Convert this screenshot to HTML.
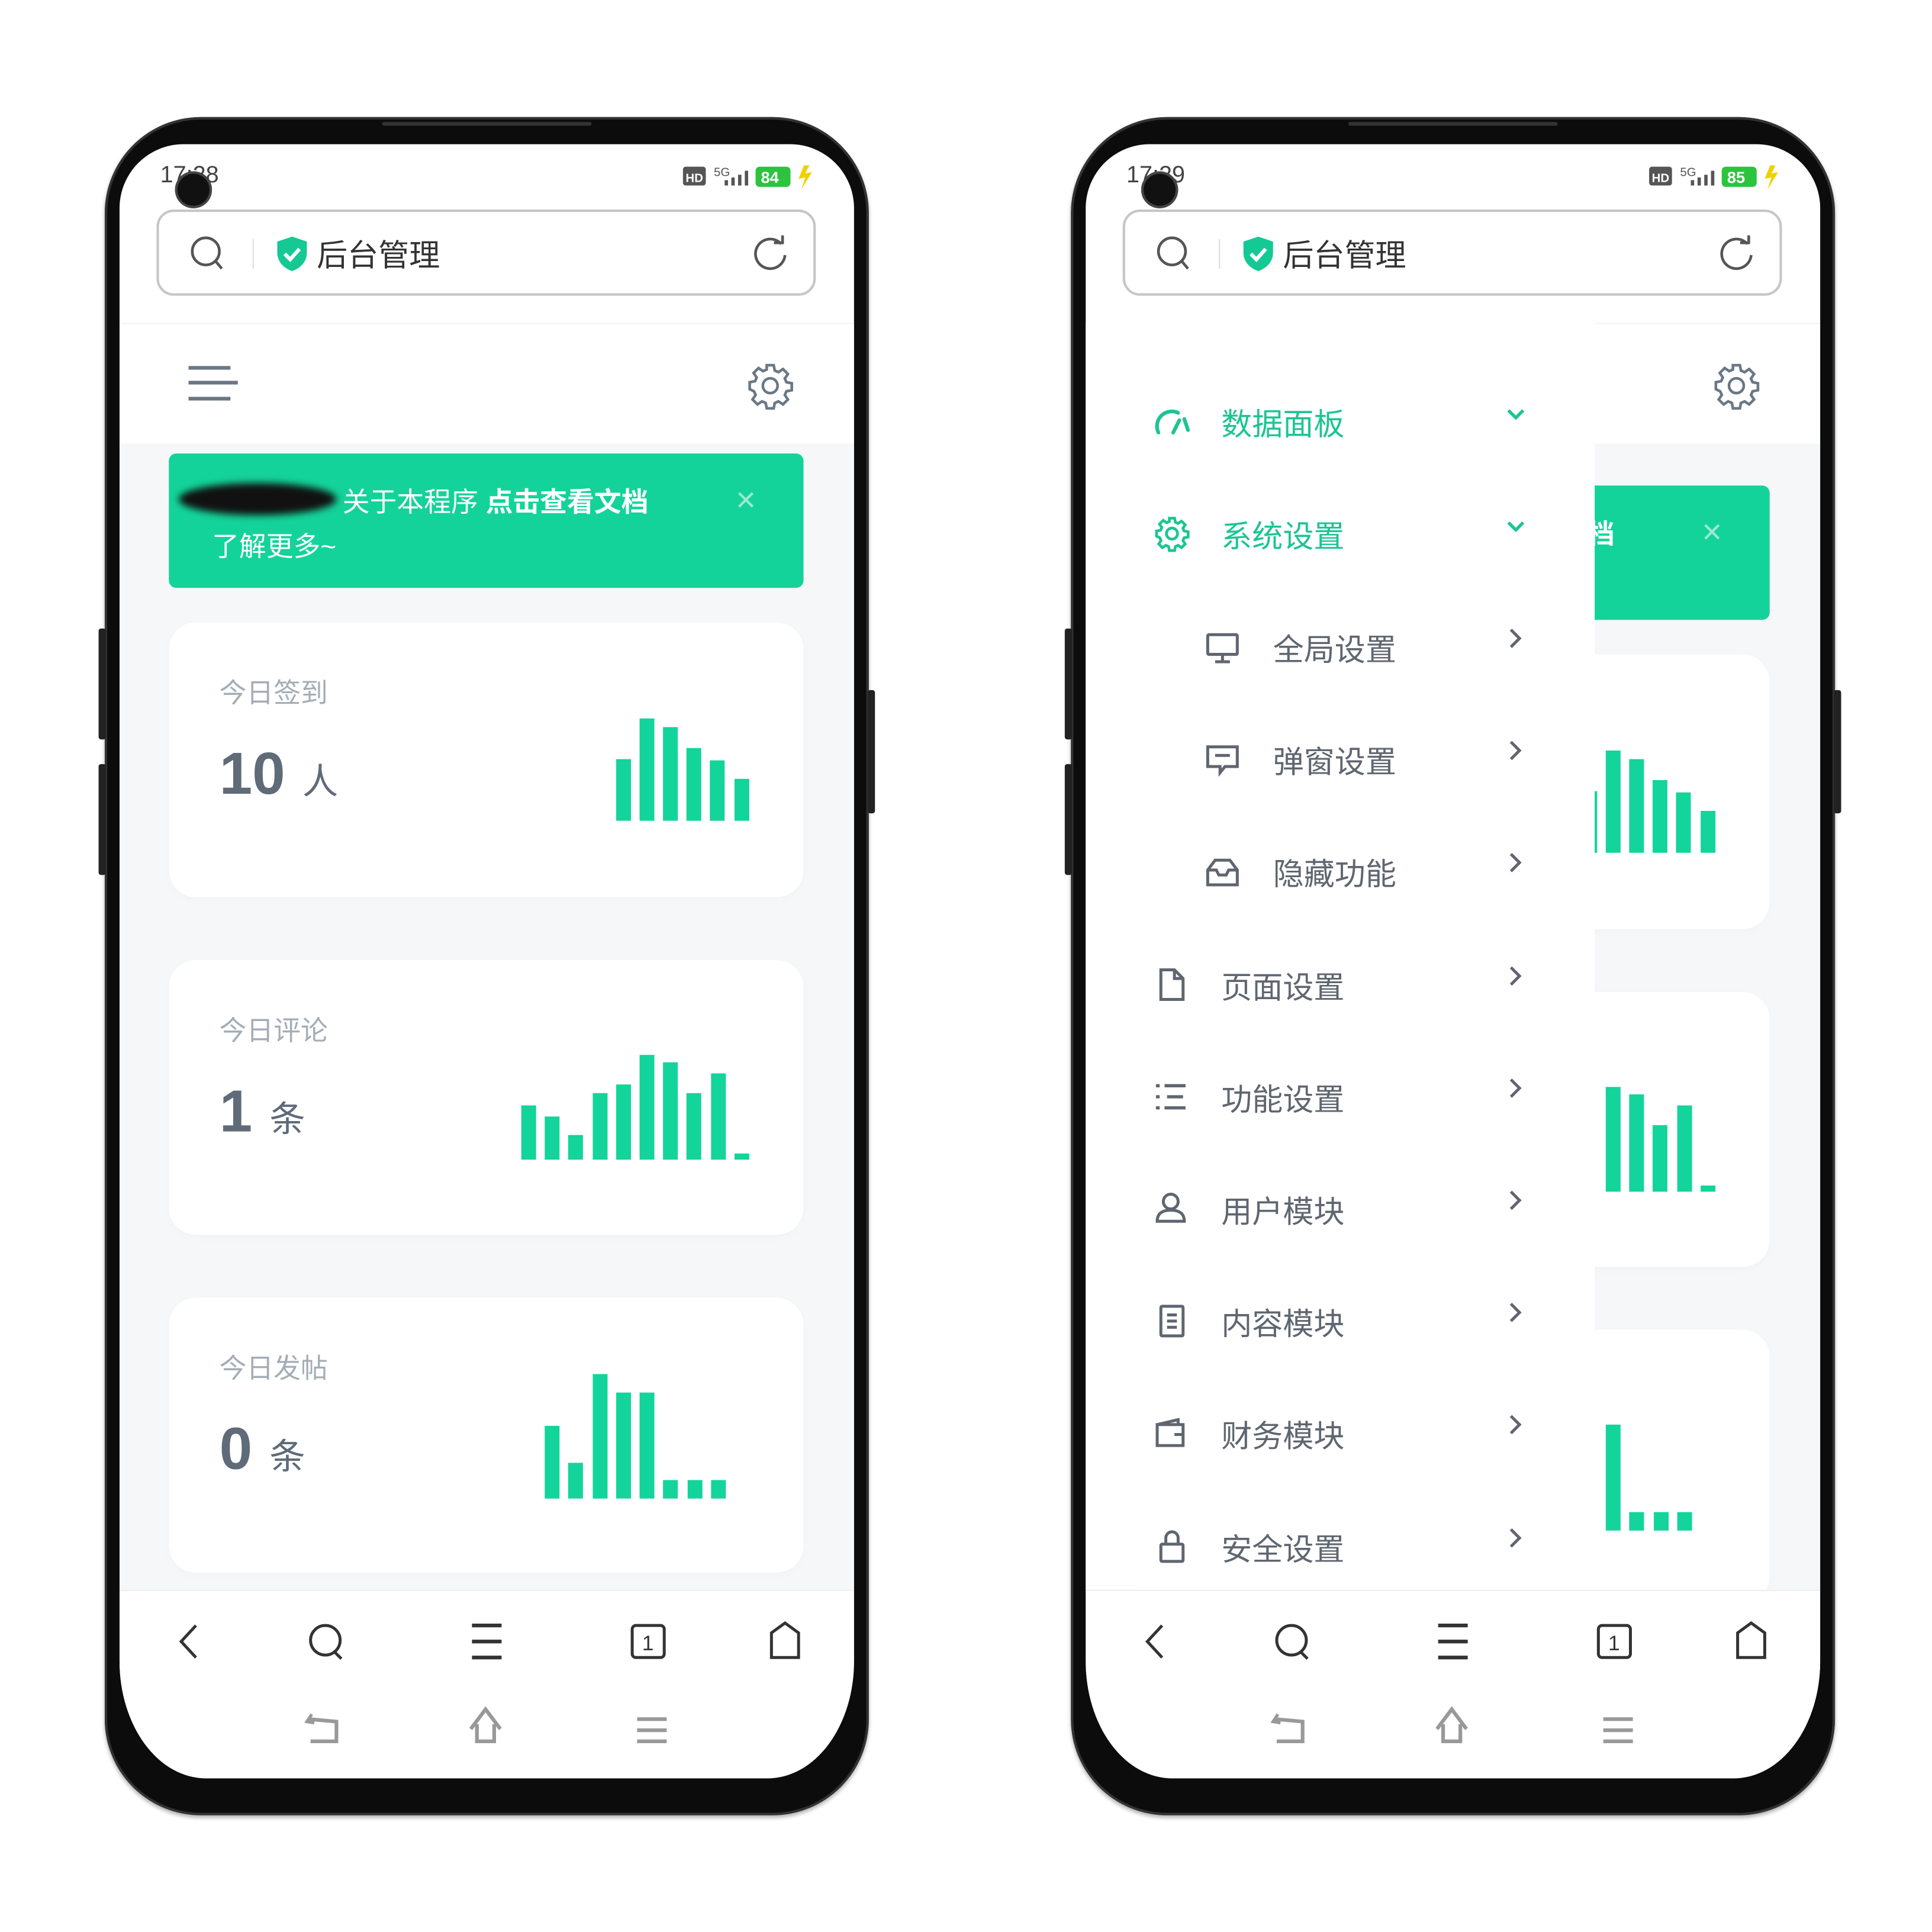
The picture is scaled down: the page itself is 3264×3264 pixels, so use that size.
<!DOCTYPE html>
<html><head><meta charset="utf-8">
<style>
*{margin:0;padding:0;box-sizing:border-box}
html,body{width:3264px;height:3264px;overflow:hidden;background:#fff}
body{font-family:"Liberation Sans","Noto Sans CJK SC",sans-serif}
#w{position:absolute;left:0;top:0;width:1560px;height:1560px;transform:scale(2.082);transform-origin:0 0}
.ph{position:absolute;top:95px;width:620px;height:1378px;background:#0c0c0c;border-radius:78px;box-shadow:inset 0 0 0 2px #333, 0 2px 3px rgba(0,0,0,.3)}
.btn{position:absolute;background:#222;width:6px;border-radius:2px}
.spk{position:absolute;left:225px;top:4px;width:170px;height:3px;background:#333;border-radius:2px}
.scr{position:absolute;left:12px;top:22px;width:596px;height:1326px;background:#fff;border-radius:52px 52px 70px 70px/52px 52px 95px 95px;overflow:hidden}
.a{position:absolute}
.time{left:33px;top:15px;font-size:19px;color:#444}
.cam{left:45px;top:22px;width:30px;height:30px;border-radius:50%;background:#111;box-shadow:0 0 0 2px #444 inset}
.addr{left:30px;top:53px;width:535px;height:70px;border:2px solid #c6c6c6;border-radius:14px;background:#fff}
.addr .t{position:absolute;left:128px;top:16px;font-size:25px;color:#333}
.hdr{left:0;top:145px;width:596px;height:98px;background:#fff;border-top:1px solid #f2f2f2}
.cont{left:0;top:243px;width:596px;height:930px;background:#f6f7f9}
.ban{left:40px;width:515px;height:109px;background:#14d39a;border-radius:6px;color:#fff;font-size:22px}
.card{left:40px;width:515px;height:223px;background:#fff;border-radius:22px;box-shadow:0 2px 8px rgba(0,0,0,.02)}
.lbl{position:absolute;left:41px;top:40px;font-size:22px;color:#a4adb6}
.num{position:absolute;left:41px;top:96px;font-size:48px;font-weight:bold;color:#5f6b78;line-height:56px}
.num span{font-size:29px;font-weight:normal;margin-left:14px;color:#5f6b78}
.bar{position:absolute;width:12px;background:#13d49b}
.nav{left:0;top:1173px;width:596px;height:160px;background:#fff;border-top:1px solid #eeeeee}
.drawer{left:0;top:145px;width:413px;height:1028px;background:#fff}
.mi{position:absolute;left:0;width:413px;height:40px;font-size:25px;color:#5f6670}
.mi .tx{position:absolute;top:2px}
.mi svg{position:absolute}
.g{color:#1cc593}
</style></head><body><div id="w">

<!-- LEFT PHONE -->
<div class="ph" style="left:85px">
 <div class="btn" style="left:-5px;top:415px;height:90px"></div>
 <div class="btn" style="left:-5px;top:525px;height:90px"></div>
 <div class="btn" style="left:619px;top:465px;height:100px"></div>
 <div class="spk"></div>
 <div class="scr">
  <div class="a time">17:28</div>
  <div class="a cam"></div>
  <svg class="a" style="left:455px;top:14px" width="120" height="26" viewBox="0 0 110 22">
   <rect x="2" y="3" width="17" height="14" rx="2" fill="#555"/><text x="4" y="14.5" font-size="9" fill="#fff" font-family="Liberation Sans" font-weight="bold">HD</text>
   <text x="25" y="10" font-size="9" fill="#555" font-family="Liberation Sans">5G</text>
   <rect x="33" y="13" width="2.5" height="4" fill="#555"/><rect x="38" y="11" width="2.5" height="6" fill="#555"/><rect x="43" y="9" width="2.5" height="8" fill="#555"/><rect x="48" y="6" width="2.5" height="11" fill="#555"/>
   <rect x="56" y="3" width="26" height="15" rx="3" fill="#2cc33e"/><text x="60" y="15" font-size="12" font-weight="bold" fill="#fff" font-family="Liberation Sans">84</text>
   <path d="M92 2 L88 12 L93 11 L90 20 L98 7 L93 8 L96 2Z" fill="#f0d000"/>
  </svg>
  <div class="a addr">
   <svg class="a" style="left:24px;top:18px" width="32" height="32" viewBox="0 0 32 32"><circle cx="14" cy="14" r="11" fill="none" stroke="#555" stroke-width="2.2"/><path d="M22 22 L27 28" stroke="#555" stroke-width="2.2"/></svg>
   <div class="a" style="left:76px;top:22px;width:1px;height:24px;background:#ddd"></div>
   <svg class="a" style="left:94px;top:19px" width="28" height="30" viewBox="0 0 28 30"><path d="M14 1 L26 5 V14 C26 22 20 27 14 29 C8 27 2 22 2 14 V5Z" fill="#14c994"/><path d="M8 15 L12.5 19.5 L20 11" fill="none" stroke="#fff" stroke-width="3"/></svg>
   <div class="t">后台管理</div>
   <svg class="a" style="left:480px;top:18px" width="32" height="32" viewBox="0 0 32 32"><path d="M25 8 A12 12 0 1 0 28 17" fill="none" stroke="#555" stroke-width="2.2"/><path d="M19 7 L26 7 L26 1" fill="none" stroke="#555" stroke-width="2.2"/></svg>
  </div>
  <div class="a hdr">
   <div class="a" style="left:56px;top:34px;width:34px;height:3px;background:#6b7785"></div>
   <div class="a" style="left:56px;top:46px;width:40px;height:3px;background:#6b7785"></div>
   <div class="a" style="left:56px;top:59px;width:34px;height:3px;background:#6b7785"></div>
   <svg class="a" style="left:508px;top:30px" width="40" height="40" viewBox="0 0 24 24"><path fill="none" stroke="#6b7785" stroke-width="1.3" d="M10.3 2h3.4l.5 2.6 1.8.8 2.2-1.5 2.4 2.4-1.5 2.2.8 1.8 2.6.5v3.4l-2.6.5-.8 1.8 1.5 2.2-2.4 2.4-2.2-1.5-1.8.8-.5 2.6h-3.4l-.5-2.6-1.8-.8-2.2 1.5-2.4-2.4 1.5-2.2-.8-1.8L2 13.7v-3.4l2.6-.5.8-1.8-1.5-2.2 2.4-2.4 2.2 1.5 1.8-.8z"/><circle cx="12" cy="12" r="3.6" fill="none" stroke="#6b7785" stroke-width="1.3"/></svg>
  </div>
  <div class="a cont">
   <div class="a ban" style="top:8px">
    <div class="a" style="left:8px;top:24px;width:128px;height:26px;background:#111;border-radius:50%;filter:blur(3px)"></div>
    <div class="a" style="left:141px;top:22px">关于本程序 <b>点击查看文档</b></div>
    <div class="a" style="left:35px;top:58px">了解更多~</div>
    <div class="a" style="left:460px;top:22px;font-size:28px;color:#9ee9cf">×</div>
   </div>
   <div class="a card" style="top:145px">
    <div class="lbl">今日签到</div><div class="num">10<span>人</span></div>
    <div class="bar" style="left:363px;top:111px;height:50px"></div><div class="bar" style="left:382px;top:78px;height:83px"></div><div class="bar" style="left:401px;top:85px;height:76px"></div><div class="bar" style="left:420px;top:102px;height:59px"></div><div class="bar" style="left:439px;top:112px;height:49px"></div><div class="bar" style="left:459px;top:127px;height:34px"></div>
   </div>
   <div class="a card" style="top:419px">
    <div class="lbl">今日评论</div><div class="num">1<span>条</span></div>
    <div class="bar" style="left:286px;top:118px;height:44px"></div><div class="bar" style="left:305px;top:127px;height:35px"></div><div class="bar" style="left:324px;top:142px;height:20px"></div><div class="bar" style="left:344px;top:108px;height:54px"></div><div class="bar" style="left:363px;top:101px;height:61px"></div><div class="bar" style="left:382px;top:77px;height:85px"></div><div class="bar" style="left:401px;top:83px;height:79px"></div><div class="bar" style="left:420px;top:108px;height:54px"></div><div class="bar" style="left:440px;top:92px;height:70px"></div><div class="bar" style="left:459px;top:157px;height:5px"></div>
   </div>
   <div class="a card" style="top:693px">
    <div class="lbl">今日发帖</div><div class="num">0<span>条</span></div>
    <div class="bar" style="left:305px;top:104px;height:59px"></div><div class="bar" style="left:324px;top:134px;height:29px"></div><div class="bar" style="left:344px;top:62px;height:101px"></div><div class="bar" style="left:363px;top:77px;height:86px"></div><div class="bar" style="left:382px;top:77px;height:86px"></div><div class="bar" style="left:401px;top:148px;height:15px"></div><div class="bar" style="left:421px;top:148px;height:15px"></div><div class="bar" style="left:440px;top:148px;height:15px"></div>
   </div>
  </div>
  <div class="a nav">
   <svg class="a" style="left:0;top:0" width="596" height="160" viewBox="0 0 596 160">
    <g fill="none" stroke="#333" stroke-width="2.4">
     <path d="M62 28 L50 41 L62 54"/>
     <circle cx="167" cy="40" r="12"/><path d="M175 50 L180 55"/>
     <path d="M286 28h24M286 41h24M286 54h24" stroke-width="3"/>
     <rect x="416" y="28" width="26" height="26" rx="3"/>
     <path d="M529 54 V34 L540 26 L551 34 V54Z"/>
    </g>
    <text x="424" y="48" font-size="17" fill="#333" font-family="Liberation Sans">1</text>
    <g fill="none" stroke="#999" stroke-width="3">
     <path d="M154 104 L176 106 V122 H155"/><path d="M156 100 L152 106 L158 107" stroke-width="2.5"/>
     <path d="M285 112 L297 96 L309 112"/><path d="M290 108 V122 H304 V108"/>
     <path d="M420 104h24M420 113h24M420 122h24"/>
    </g>
   </svg>
  </div>
 </div>
</div>

<!-- RIGHT PHONE -->
<div class="ph" style="left:869px">
 <div class="btn" style="left:-5px;top:415px;height:90px"></div>
 <div class="btn" style="left:-5px;top:525px;height:90px"></div>
 <div class="btn" style="left:619px;top:465px;height:100px"></div>
 <div class="spk"></div>
 <div class="scr">
  <div class="a time">17:29</div>
  <div class="a cam"></div>
  <svg class="a" style="left:455px;top:14px" width="120" height="26" viewBox="0 0 110 22">
   <rect x="2" y="3" width="17" height="14" rx="2" fill="#555"/><text x="4" y="14.5" font-size="9" fill="#fff" font-family="Liberation Sans" font-weight="bold">HD</text>
   <text x="25" y="10" font-size="9" fill="#555" font-family="Liberation Sans">5G</text>
   <rect x="33" y="13" width="2.5" height="4" fill="#555"/><rect x="38" y="11" width="2.5" height="6" fill="#555"/><rect x="43" y="9" width="2.5" height="8" fill="#555"/><rect x="48" y="6" width="2.5" height="11" fill="#555"/>
   <rect x="56" y="3" width="26" height="15" rx="3" fill="#2cc33e"/><text x="60" y="15" font-size="12" font-weight="bold" fill="#fff" font-family="Liberation Sans">85</text>
   <path d="M92 2 L88 12 L93 11 L90 20 L98 7 L93 8 L96 2Z" fill="#f0d000"/>
  </svg>
  <div class="a addr">
   <svg class="a" style="left:24px;top:18px" width="32" height="32" viewBox="0 0 32 32"><circle cx="14" cy="14" r="11" fill="none" stroke="#555" stroke-width="2.2"/><path d="M22 22 L27 28" stroke="#555" stroke-width="2.2"/></svg>
   <div class="a" style="left:76px;top:22px;width:1px;height:24px;background:#ddd"></div>
   <svg class="a" style="left:94px;top:19px" width="28" height="30" viewBox="0 0 28 30"><path d="M14 1 L26 5 V14 C26 22 20 27 14 29 C8 27 2 22 2 14 V5Z" fill="#14c994"/><path d="M8 15 L12.5 19.5 L20 11" fill="none" stroke="#fff" stroke-width="3"/></svg>
   <div class="t">后台管理</div>
   <svg class="a" style="left:480px;top:18px" width="32" height="32" viewBox="0 0 32 32"><path d="M25 8 A12 12 0 1 0 28 17" fill="none" stroke="#555" stroke-width="2.2"/><path d="M19 7 L26 7 L26 1" fill="none" stroke="#555" stroke-width="2.2"/></svg>
  </div>
  <div class="a hdr">
   <svg class="a" style="left:508px;top:30px" width="40" height="40" viewBox="0 0 24 24"><path fill="none" stroke="#6b7785" stroke-width="1.3" d="M10.3 2h3.4l.5 2.6 1.8.8 2.2-1.5 2.4 2.4-1.5 2.2.8 1.8 2.6.5v3.4l-2.6.5-.8 1.8 1.5 2.2-2.4 2.4-2.2-1.5-1.8.8-.5 2.6h-3.4l-.5-2.6-1.8-.8-2.2 1.5-2.4-2.4 1.5-2.2-.8-1.8L2 13.7v-3.4l2.6-.5.8-1.8-1.5-2.2 2.4-2.4 2.2 1.5 1.8-.8z"/><circle cx="12" cy="12" r="3.6" fill="none" stroke="#6b7785" stroke-width="1.3"/></svg>
  </div>
  <div class="a cont">
   <div class="a ban" style="top:34px">
    <div class="a" style="left:141px;top:22px">关于本程序 <b>点击查看文档</b></div>
    <div class="a" style="left:460px;top:22px;font-size:28px;color:#9ee9cf">×</div>
   </div>
   <div class="a card" style="top:171px">
    <div class="bar" style="left:363px;top:111px;height:50px"></div><div class="bar" style="left:382px;top:78px;height:83px"></div><div class="bar" style="left:401px;top:85px;height:76px"></div><div class="bar" style="left:420px;top:102px;height:59px"></div><div class="bar" style="left:439px;top:112px;height:49px"></div><div class="bar" style="left:459px;top:127px;height:34px"></div>
   </div>
   <div class="a card" style="top:445px">
    <div class="bar" style="left:382px;top:77px;height:85px"></div><div class="bar" style="left:401px;top:83px;height:79px"></div><div class="bar" style="left:420px;top:108px;height:54px"></div><div class="bar" style="left:440px;top:92px;height:70px"></div><div class="bar" style="left:459px;top:157px;height:5px"></div>
   </div>
   <div class="a card" style="top:719px">
    <div class="bar" style="left:382px;top:77px;height:86px"></div><div class="bar" style="left:401px;top:148px;height:15px"></div><div class="bar" style="left:421px;top:148px;height:15px"></div><div class="bar" style="left:440px;top:148px;height:15px"></div>
   </div>
  </div>
  <div class="a drawer">
   <div class="mi g" style="top:61px"><svg style="left:55px;top:6px" width="30" height="26" viewBox="0 0 30 26"><path d="M4 22 A12 12 0 0 1 20 6" fill="none" stroke="#1cc593" stroke-width="3" stroke-linecap="round"/><path d="M16 22 L21 12 M25 11 L28 20" stroke="#1cc593" stroke-width="3" stroke-linecap="round"/></svg><span class="tx" style="left:110px">数据面板</span><svg style="left:340px;top:4px" width="18" height="18" viewBox="0 0 18 18"><path d="M3 6 L9 12 L15 6" fill="none" stroke="#1cc593" stroke-width="2.6"/></svg></div>
   <div class="mi g" style="top:152px"><svg style="left:55px;top:4px" width="30" height="30" viewBox="0 0 24 24"><path fill="none" stroke="#1cc593" stroke-width="1.8" d="M10.3 2h3.4l.5 2.6 1.8.8 2.2-1.5 2.4 2.4-1.5 2.2.8 1.8 2.6.5v3.4l-2.6.5-.8 1.8 1.5 2.2-2.4 2.4-2.2-1.5-1.8.8-.5 2.6h-3.4l-.5-2.6-1.8-.8-2.2 1.5-2.4-2.4 1.5-2.2-.8-1.8L2 13.7v-3.4l2.6-.5.8-1.8-1.5-2.2 2.4-2.4 2.2 1.5 1.8-.8z"/><circle cx="12" cy="12" r="3.6" fill="none" stroke="#1cc593" stroke-width="1.8"/></svg><span class="tx" style="left:110px">系统设置</span><svg style="left:340px;top:4px" width="18" height="18" viewBox="0 0 18 18"><path d="M3 6 L9 12 L15 6" fill="none" stroke="#1cc593" stroke-width="2.6"/></svg></div>
   <div class="mi" style="top:244px"><svg style="left:97px;top:6px" width="28" height="28" viewBox="0 0 28 28" fill="none" stroke="#5f6670" stroke-width="2.4"><rect x="2" y="3" width="24" height="16" rx="1"/><path d="M14 19 V24 M8 25 H20"/></svg><span class="tx" style="left:152px">全局设置</span><svg style="left:342px;top:2px" width="14" height="20" viewBox="0 0 14 20"><path d="M3 3 L10 10 L3 17" fill="none" stroke="#5f6670" stroke-width="2.4"/></svg></div>
   <div class="mi" style="top:335px"><svg style="left:97px;top:6px" width="28" height="28" viewBox="0 0 28 28" fill="none" stroke="#5f6670" stroke-width="2.4"><path d="M2 3 H26 V19 H16 L12 24 V19 H2Z"/><path d="M8 10 H20"/></svg><span class="tx" style="left:152px">弹窗设置</span><svg style="left:342px;top:2px" width="14" height="20" viewBox="0 0 14 20"><path d="M3 3 L10 10 L3 17" fill="none" stroke="#5f6670" stroke-width="2.4"/></svg></div>
   <div class="mi" style="top:426px"><svg style="left:97px;top:6px" width="28" height="28" viewBox="0 0 28 28" fill="none" stroke="#5f6670" stroke-width="2.4"><path d="M2 12 L8 4 H20 L26 12 V24 H2Z"/><path d="M2 12 H9 L11 16 H17 L19 12 H26"/></svg><span class="tx" style="left:152px">隐藏功能</span><svg style="left:342px;top:2px" width="14" height="20" viewBox="0 0 14 20"><path d="M3 3 L10 10 L3 17" fill="none" stroke="#5f6670" stroke-width="2.4"/></svg></div>
   <div class="mi" style="top:518px"><svg style="left:57px;top:5px" width="26" height="28" viewBox="0 0 26 28" fill="none" stroke="#5f6670" stroke-width="2.4"><path d="M4 2 H15 L22 9 V26 H4Z M15 2 V9 H22"/></svg><span class="tx" style="left:110px">页面设置</span><svg style="left:342px;top:2px" width="14" height="20" viewBox="0 0 14 20"><path d="M3 3 L10 10 L3 17" fill="none" stroke="#5f6670" stroke-width="2.4"/></svg></div>
   <div class="mi" style="top:609px"><svg style="left:55px;top:6px" width="28" height="26" viewBox="0 0 28 26" fill="none" stroke="#5f6670" stroke-width="2.6"><path d="M2 4h3M2 13h3M2 22h3M9 4h17M11 13h13M9 22h17"/></svg><span class="tx" style="left:110px">功能设置</span><svg style="left:342px;top:2px" width="14" height="20" viewBox="0 0 14 20"><path d="M3 3 L10 10 L3 17" fill="none" stroke="#5f6670" stroke-width="2.4"/></svg></div>
   <div class="mi" style="top:700px"><svg style="left:55px;top:4px" width="28" height="28" viewBox="0 0 28 28" fill="none" stroke="#5f6670" stroke-width="2.4"><circle cx="14" cy="9" r="6"/><path d="M3 25 C3 18 8 16 14 16 C20 16 25 18 25 25Z"/></svg><span class="tx" style="left:110px">用户模块</span><svg style="left:342px;top:2px" width="14" height="20" viewBox="0 0 14 20"><path d="M3 3 L10 10 L3 17" fill="none" stroke="#5f6670" stroke-width="2.4"/></svg></div>
   <div class="mi" style="top:791px"><svg style="left:57px;top:5px" width="26" height="28" viewBox="0 0 26 28" fill="none" stroke="#5f6670" stroke-width="2.4"><rect x="4" y="2" width="18" height="24" rx="1"/><path d="M9 9h8M9 14h8M9 19h8"/></svg><span class="tx" style="left:110px">内容模块</span><svg style="left:342px;top:2px" width="14" height="20" viewBox="0 0 14 20"><path d="M3 3 L10 10 L3 17" fill="none" stroke="#5f6670" stroke-width="2.4"/></svg></div>
   <div class="mi" style="top:882px"><svg style="left:55px;top:6px" width="28" height="26" viewBox="0 0 28 26" fill="none" stroke="#5f6670" stroke-width="2.4"><path d="M3 6 H24 V23 H3Z M3 6 L20 2 V6"/><path d="M17 14 H24"/></svg><span class="tx" style="left:110px">财务模块</span><svg style="left:342px;top:2px" width="14" height="20" viewBox="0 0 14 20"><path d="M3 3 L10 10 L3 17" fill="none" stroke="#5f6670" stroke-width="2.4"/></svg></div>
   <div class="mi" style="top:974px"><svg style="left:57px;top:4px" width="26" height="30" viewBox="0 0 26 30" fill="none" stroke="#5f6670" stroke-width="2.4"><rect x="4" y="13" width="18" height="14" rx="1"/><path d="M8 13 V8 A5 5 0 0 1 18 8 V13"/></svg><span class="tx" style="left:110px">安全设置</span><svg style="left:342px;top:2px" width="14" height="20" viewBox="0 0 14 20"><path d="M3 3 L10 10 L3 17" fill="none" stroke="#5f6670" stroke-width="2.4"/></svg></div>
  </div>
  <div class="a nav">
   <svg class="a" style="left:0;top:0" width="596" height="160" viewBox="0 0 596 160">
    <g fill="none" stroke="#333" stroke-width="2.4">
     <path d="M62 28 L50 41 L62 54"/>
     <circle cx="167" cy="40" r="12"/><path d="M175 50 L180 55"/>
     <path d="M286 28h24M286 41h24M286 54h24" stroke-width="3"/>
     <rect x="416" y="28" width="26" height="26" rx="3"/>
     <path d="M529 54 V34 L540 26 L551 34 V54Z"/>
    </g>
    <text x="424" y="48" font-size="17" fill="#333" font-family="Liberation Sans">1</text>
    <g fill="none" stroke="#999" stroke-width="3">
     <path d="M154 104 L176 106 V122 H155"/><path d="M156 100 L152 106 L158 107" stroke-width="2.5"/>
     <path d="M285 112 L297 96 L309 112"/><path d="M290 108 V122 H304 V108"/>
     <path d="M420 104h24M420 113h24M420 122h24"/>
    </g>
   </svg>
  </div>
 </div>
</div>

</div></body></html>
